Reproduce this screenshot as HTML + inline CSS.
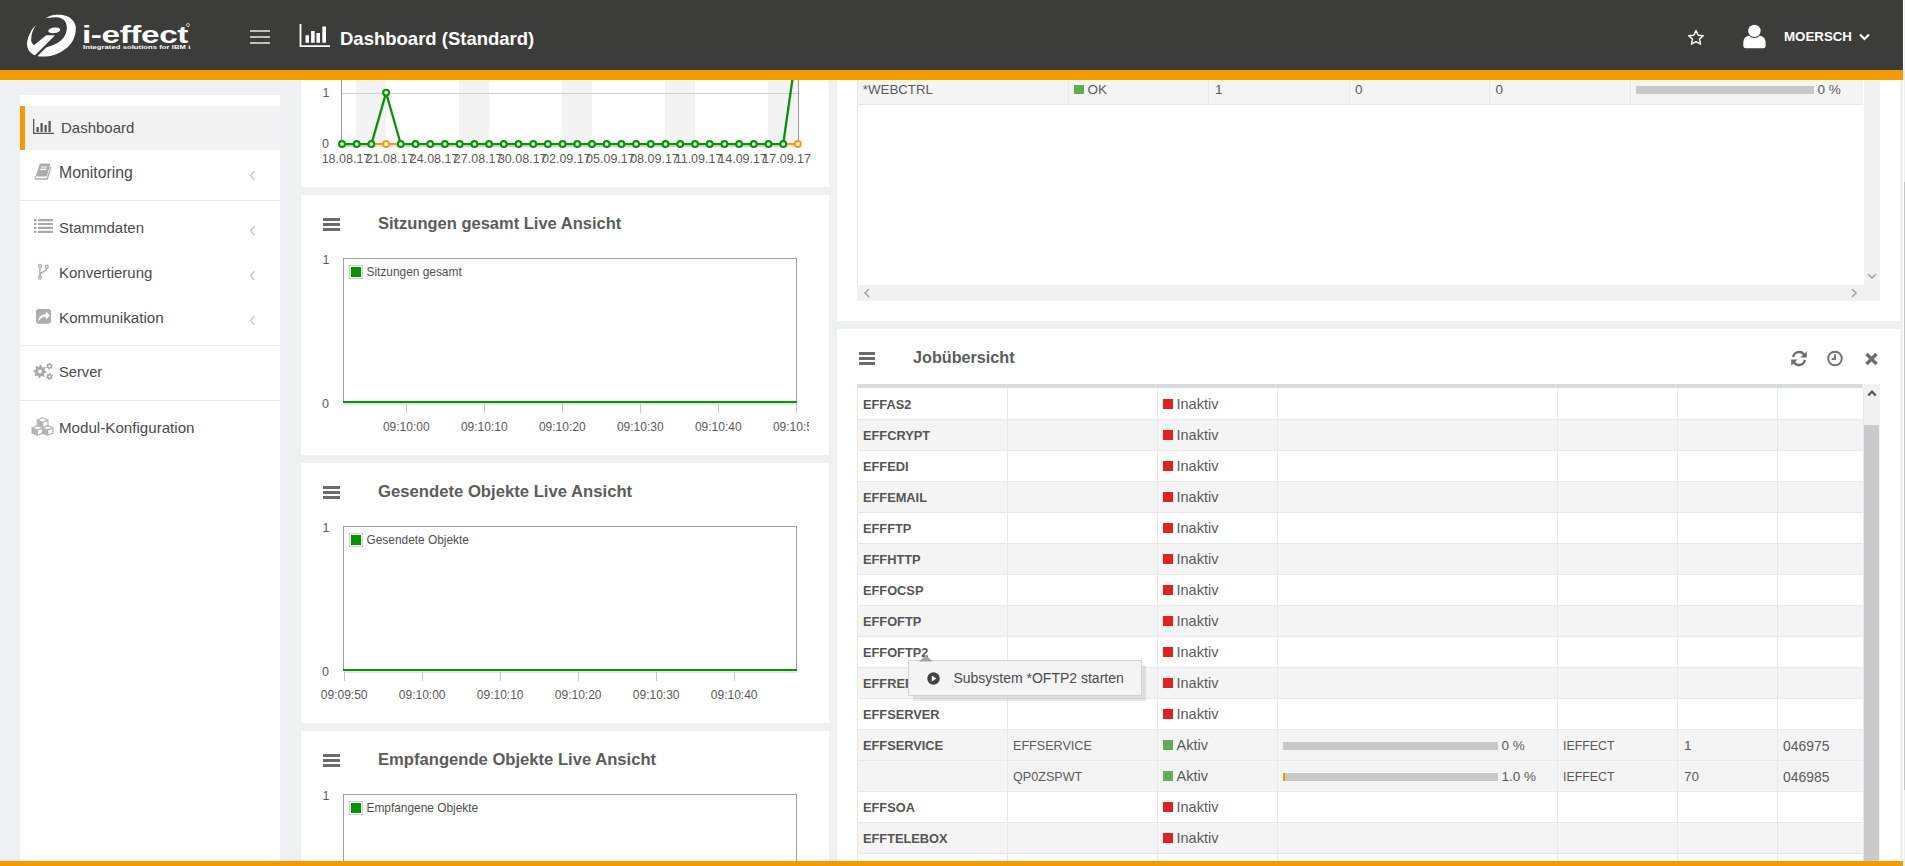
<!DOCTYPE html>
<html><head><meta charset="utf-8">
<style>
*{box-sizing:border-box;margin:0;padding:0}
html,body{width:1905px;height:866px;overflow:hidden;background:#eef0f4;font-family:"Liberation Sans",sans-serif;color:#555}
.abs{position:absolute}
#hdr{position:absolute;left:0;top:0;width:1903px;height:70px;background:#3c3c3b;z-index:10}
#hdrbar{position:absolute;left:0;top:70px;width:1903px;height:10px;background:#f59b00;z-index:10}
#botbar{position:absolute;left:0;top:861px;width:1903px;height:5px;background:#f59b00;z-index:10}
#vscroll{position:absolute;left:1903px;top:0;width:2px;height:866px;background:#fff;border-right:1px solid #eeeeee;z-index:11}
#vthumb{position:absolute;left:1904px;top:182px;width:1px;height:608px;background:#c4c4c4;z-index:12}
.panel{position:absolute;background:#fff}
.side{position:absolute;left:20px;top:95px;width:260px;height:780px;background:#fff}
.si{position:absolute;left:0;width:260px;height:45px;font-size:15px;color:#4d4d4d}
.si span{position:absolute;left:40px;top:17px;line-height:17px;white-space:nowrap}
.sep{position:absolute;left:0;width:260px;height:1px;background:#e6e6e6}
.chev{position:absolute;left:229px;top:20px}
.ptitle{position:absolute;font-weight:bold;font-size:16.4px;color:#5c5c5c;white-space:nowrap;line-height:20px}
.ham{position:absolute;width:17px;height:14px}
.ham i{position:absolute;left:0;width:17px;height:3px;background:#6a6a6a}
.lbl{position:absolute;font-size:11px;color:#555;white-space:nowrap;line-height:13px}
</style></head>
<body>
<div id="hdr">
 <svg class="abs" style="left:24px;top:12px" width="56" height="48" viewBox="0 0 56 48">
  <path fill="#fff" d="M21.3,6.4 C26,3.5 30,2.6 33.3,2.8 C40,2.6 45,4.5 47.1,6.7 C50.5,9.5 52,13 51.8,16.6 C51.8,21 50.8,25 48.8,28.8 C46,33.5 42.5,36.8 38.8,38.8 C34.5,41.5 29.5,43.8 24.9,44.3 C20,44.8 15,44.6 13.3,44.3 L22.2,35.5 C26,34 30,33 33.3,31 C37,29 40,26 41,23.3 C42.5,20 43.2,17 42.7,13.9 C42.3,10.5 40.8,8.5 38.8,7.2 C36.5,5.8 33.5,5.2 31,5.3 C27,5.5 23.5,6 21.3,6.4 Z"/>
  <path fill="#fff" d="M11.9,13 C7.5,17 4,24 3,31 C3,35 4,38 6,40 C8,42 10,43 11.1,43.2 L31,23.3 L22.2,23.3 L10,33.3 C7.5,31 7,29 7.2,27.7 C7.2,23 8.5,18 11.9,13 Z"/>
  <ellipse fill="#fff" cx="30.2" cy="18.3" rx="6" ry="2.8" transform="rotate(-8 30.2 18.3)"/>
 </svg>
 <div class="abs" style="left:82px;top:22.5px;font-size:24.5px;font-weight:bold;color:#fff;line-height:24px;transform-origin:0 0;transform:scaleX(1.36);letter-spacing:-0.3px">i-effect</div>
 <div class="abs" style="left:186px;top:23px;width:3.8px;height:3.8px;border:0.8px solid #cfcfcf;border-radius:50%"></div>
 <div class="abs" style="left:82.5px;top:44.1px;font-size:6px;font-weight:bold;color:#fff;line-height:7px;transform-origin:0 0;transform:scaleX(1.27);white-space:nowrap;letter-spacing:0.05px">Integrated solutions for IBM i</div>
 <!-- hamburger -->
 <div class="abs" style="left:250px;top:30px;width:20px;height:2px;background:#bdbdbd"></div>
 <div class="abs" style="left:250px;top:36px;width:20px;height:2px;background:#bdbdbd"></div>
 <div class="abs" style="left:250px;top:42px;width:20px;height:2px;background:#bdbdbd"></div>
 <!-- chart icon -->
 <svg class="abs" style="left:299px;top:24px" width="31" height="24" viewBox="0 0 31 24">
  <path fill="#fff" d="M0.6,0h1.8v21.2H31V23H0.6z M6.5,11.2h3.6v7.6H6.5z M12.1,7h3.6v11.8h-3.6z M17.4,9.1h3.6v9.7h-3.6z M23.3,2.4h3.7v16.4h-3.7z"/>
 </svg>
 <div class="abs" style="left:340px;top:28px;font-size:18.5px;font-weight:bold;color:#fff;line-height:21px;white-space:nowrap">Dashboard (Standard)</div>
 <!-- star -->
 <svg class="abs" style="left:1687px;top:29px" width="18" height="17" viewBox="0 0 18 17">
  <path fill="none" stroke="#fff" stroke-width="1.4" stroke-linejoin="round" d="M9,1.5 L11.2,6.2 L16.3,6.7 L12.5,10.1 L13.6,15.2 L9,12.6 L4.4,15.2 L5.5,10.1 L1.7,6.7 L6.8,6.2 Z"/>
 </svg>
 <!-- user -->
 <svg class="abs" style="left:1742px;top:24px" width="25" height="25" viewBox="0 0 25 25">
  <path fill="#fff" d="M1.3,21.5 V18.8 C1.3,14.2 4,11.8 8,11.8 H16.8 C20.8,11.8 23.6,14.2 23.6,18.8 V21.5 C23.6,23 22.8,24.2 21.3,24.2 H3.6 C2.1,24.2 1.3,23 1.3,21.5 Z"/>
  <circle cx="12.4" cy="6.9" r="7.1" fill="#3c3c3b"/>
  <circle cx="12.4" cy="6.9" r="6.2" fill="#fff"/>
 </svg>
 <div class="abs" style="left:1784px;top:29px;font-size:13.3px;font-weight:bold;color:#fff;line-height:15px;white-space:nowrap">MOERSCH</div>
 <svg class="abs" style="left:1859px;top:33px" width="11" height="8" viewBox="0 0 11 8">
  <path fill="none" stroke="#fff" stroke-width="2" d="M1,1.5 L5.5,6 L10,1.5"/>
 </svg>
</div>
<div id="hdrbar"></div>
<div id="botbar"></div>
<div id="vscroll"></div><div id="vthumb"></div>

<!-- sidebar -->
<div class="side">
 <div class="abs" style="left:0;top:11px;width:260px;height:44px;background:#f2f2f2"></div>
 <div class="abs" style="left:0;top:11px;width:5px;height:44px;background:#f59b00"></div>
 <!-- Dashboard icon -->
 <svg class="abs" style="left:13px;top:24px" width="21" height="15" viewBox="0 0 21 15">
  <path fill="#555" d="M0,0h1.3v13.7H21V15H0z M3.5,8h2.2v5H3.5z M7.5,4h2.2v9H7.5z M11.5,6h2.2v7h-2.2z M15.5,2h2.2v11h-2.2z"/>
 </svg>
 <div class="abs" style="left:41px;top:24px;font-size:15px;color:#4a4a4a;line-height:17px">Dashboard</div>
 <!-- Monitoring -->
 <svg class="abs" style="left:14px;top:68px" width="19" height="18" viewBox="0 0 19 18">
  <path fill="#adadad" d="M5.9,0.6 H15.3 C16,0.6 16.3,1.1 16.1,1.7 L12.8,13.6 H1.6 Z"/>
  <path fill="none" stroke="#adadad" stroke-width="1.3" d="M2,13.7 C0.7,14.2 0.8,16 2.2,16 H13.3 L16.9,3.6"/>
  <path fill="#fff" d="M7.2,3.4 H13.3 L13,4.6 H6.9 Z M6.4,5.7 H12.6 L12.3,6.9 H6.1 Z"/>
 </svg>
 <div class="abs" style="left:39px;top:68.7px;font-size:15.8px;color:#4a4a4a;line-height:17px">Monitoring</div>
 <div class="chev" style="top:71.5px"><svg width="7" height="11" viewBox="0 0 7 11"><path fill="none" stroke="#c8c8c8" stroke-width="1.3" d="M5.5,1 L1.5,5.5 L5.5,10"/></svg></div>
 <div class="sep" style="top:105px"></div>
 <!-- Stammdaten -->
 <svg class="abs" style="left:14px;top:124px" width="19" height="14" viewBox="0 0 19 14">
  <path fill="#a9a9a9" d="M0,0h2.5v2.2H0z M4,0h15v2.2H4z M0,3.9h2.5v2.2H0z M4,3.9h15v2.2H4z M0,7.8h2.5v2.2H0z M4,7.8h15v2.2H4z M0,11.7h2.5v2.2H0z M4,11.7h15v2.2H4z"/>
 </svg>
 <div class="abs" style="left:39px;top:124px;font-size:15px;color:#4a4a4a;line-height:17px">Stammdaten</div>
 <div class="chev" style="top:126.5px"><svg width="7" height="11" viewBox="0 0 7 11"><path fill="none" stroke="#c8c8c8" stroke-width="1.3" d="M5.5,1 L1.5,5.5 L5.5,10"/></svg></div>
 <!-- Konvertierung -->
 <svg class="abs" style="left:16px;top:168px" width="14" height="17" viewBox="0 0 14 17">
  <g fill="none" stroke="#a9a9a9" stroke-width="1.3"><circle cx="4" cy="2.9" r="1.5"/><circle cx="10.7" cy="3.7" r="1.5"/><circle cx="4" cy="14.5" r="1.5"/><path d="M4,4.4 V13 M10.7,5.2 C10.7,9 4.5,8.5 4,11.5"/></g>
 </svg>
 <div class="abs" style="left:39px;top:169px;font-size:15px;color:#4a4a4a;line-height:17px">Konvertierung</div>
 <div class="chev" style="top:171.5px"><svg width="7" height="11" viewBox="0 0 7 11"><path fill="none" stroke="#c8c8c8" stroke-width="1.3" d="M5.5,1 L1.5,5.5 L5.5,10"/></svg></div>
 <!-- Kommunikation -->
 <svg class="abs" style="left:16px;top:214px" width="16" height="16" viewBox="0 0 16 16">
  <rect x="0" y="0" width="15" height="14.7" rx="2.6" fill="#adadad"/>
  <path fill="#fff" d="M2.2,13.2 C2.2,9 4.6,5.2 9.9,5.0 V2.2 L13.8,6.4 L9.9,10.5 V7.8 C6.5,7.8 3.8,9.5 2.2,13.2 Z"/>
 </svg>
 <div class="abs" style="left:39px;top:213.9px;font-size:15.2px;color:#4a4a4a;line-height:17px">Kommunikation</div>
 <div class="chev" style="top:216.5px"><svg width="7" height="11" viewBox="0 0 7 11"><path fill="none" stroke="#c8c8c8" stroke-width="1.3" d="M5.5,1 L1.5,5.5 L5.5,10"/></svg></div>
 <div class="sep" style="top:250px"></div>
 <!-- Server -->
 <svg class="abs" style="left:13px;top:267px" width="21" height="19" viewBox="0 0 21 19"><path d="M7.00,2.90 L8.29,3.03 L8.84,5.07 L9.67,5.51 L11.67,4.83 L12.49,5.83 L11.43,7.66 L11.71,8.56 L13.60,9.50 L13.47,10.79 L11.43,11.34 L10.99,12.17 L11.67,14.17 L10.67,14.99 L8.84,13.93 L7.94,14.21 L7.00,16.10 L5.71,15.97 L5.16,13.93 L4.33,13.49 L2.33,14.17 L1.51,13.17 L2.57,11.34 L2.29,10.44 L0.40,9.50 L0.53,8.21 L2.57,7.66 L3.01,6.83 L2.33,4.83 L3.33,4.01 L5.16,5.07 L6.06,4.79 Z" fill="#a9a9a9"/><circle cx="7" cy="9.5" r="2" fill="#fff"/><path d="M16.50,0.60 L17.43,0.72 L17.75,2.03 L18.27,2.43 L19.62,2.40 L19.98,3.27 L19.00,4.20 L18.91,4.85 L19.62,6.00 L19.05,6.75 L17.75,6.37 L17.15,6.61 L16.50,7.80 L15.57,7.68 L15.25,6.37 L14.73,5.97 L13.38,6.00 L13.02,5.13 L14.00,4.20 L14.09,3.55 L13.38,2.40 L13.95,1.65 L15.25,2.03 L15.85,1.79 Z" fill="#a9a9a9"/><circle cx="16.5" cy="4.2" r="1.1" fill="#fff"/><path d="M16.50,10.90 L17.43,11.02 L17.75,12.33 L18.27,12.73 L19.62,12.70 L19.98,13.57 L19.00,14.50 L18.91,15.15 L19.62,16.30 L19.05,17.05 L17.75,16.67 L17.15,16.91 L16.50,18.10 L15.57,17.98 L15.25,16.67 L14.73,16.27 L13.38,16.30 L13.02,15.43 L14.00,14.50 L14.09,13.85 L13.38,12.70 L13.95,11.95 L15.25,12.33 L15.85,12.09 Z" fill="#a9a9a9"/><circle cx="16.5" cy="14.5" r="1.1" fill="#fff"/></svg>
 <div class="abs" style="left:39px;top:269.2px;font-size:14.7px;color:#4a4a4a;line-height:17px">Server</div>
 <div class="sep" style="top:305px"></div>
 <!-- Modul -->
 <svg class="abs" style="left:11px;top:321px" width="24" height="21" viewBox="0 0 24 21"><path d="M6.3,4.0 L11.6,6.2 L11.6,11.5 L6.3,9.3 Z" fill="#b3b3b3" stroke="#b3b3b3" stroke-width="1.2" stroke-linejoin="round"/><path d="M11.6,6.2 L16.9,4.0 L16.9,9.3 L11.6,11.5 Z" fill="#fff" stroke="#b3b3b3" stroke-width="1.2" stroke-linejoin="round"/><path d="M11.6,1.8 L16.9,4.0 L11.6,6.2 L6.3,4.0 Z" fill="#fff" stroke="#b3b3b3" stroke-width="1.2" stroke-linejoin="round"/><path d="M1.1000000000000005,11.8 L6.4,14.0 L6.4,19.3 L1.1000000000000005,17.1 Z" fill="#b3b3b3" stroke="#b3b3b3" stroke-width="1.2" stroke-linejoin="round"/><path d="M6.4,14.0 L11.7,11.8 L11.7,17.1 L6.4,19.3 Z" fill="#fff" stroke="#b3b3b3" stroke-width="1.2" stroke-linejoin="round"/><path d="M6.4,9.6 L11.7,11.8 L6.4,14.0 L1.1000000000000005,11.8 Z" fill="#fff" stroke="#b3b3b3" stroke-width="1.2" stroke-linejoin="round"/><path d="M11.399999999999999,11.8 L16.7,14.0 L16.7,19.3 L11.399999999999999,17.1 Z" fill="#b3b3b3" stroke="#b3b3b3" stroke-width="1.2" stroke-linejoin="round"/><path d="M16.7,14.0 L22.0,11.8 L22.0,17.1 L16.7,19.3 Z" fill="#fff" stroke="#b3b3b3" stroke-width="1.2" stroke-linejoin="round"/><path d="M16.7,9.6 L22.0,11.8 L16.7,14.0 L11.399999999999999,11.8 Z" fill="#fff" stroke="#b3b3b3" stroke-width="1.2" stroke-linejoin="round"/></svg>
 <div class="abs" style="left:39px;top:323.9px;font-size:15.15px;color:#4a4a4a;line-height:17px">Modul-Konfiguration</div>
</div>

<div class="panel" style="left:301px;top:60px;width:528px;height:127px"></div>
<div class="panel" style="left:301px;top:195px;width:528px;height:260px"></div>
<div class="panel" style="left:301px;top:463px;width:528px;height:260px"></div>
<div class="panel" style="left:301px;top:731px;width:528px;height:140px"></div>
<svg class="abs" style="left:301px;top:60px" width="528" height="127" viewBox="301 60 528 127">
<rect x="356" y="60" width="30" height="84" fill="#f3f3f3"/>
<rect x="459" y="60" width="30" height="84" fill="#f3f3f3"/>
<rect x="562" y="60" width="30" height="84" fill="#f3f3f3"/>
<rect x="665" y="60" width="30" height="84" fill="#f3f3f3"/>
<rect x="768" y="60" width="30" height="84" fill="#f3f3f3"/>
<line x1="341.5" y1="93.5" x2="798.5" y2="93.5" stroke="#cfcfcf" stroke-width="1"/>
<line x1="341.5" y1="60" x2="341.5" y2="144" stroke="#9a9a9a" stroke-width="1"/>
<line x1="798.5" y1="60" x2="798.5" y2="144" stroke="#9a9a9a" stroke-width="1"/>
<polyline points="342,146 797.9,146" fill="none" stroke="rgba(0,0,0,0.10)" stroke-width="2.5"/>
<polyline points="342.0,146.0 356.7,146.0 371.4,146.0 386.1,94.6 400.8,146.0 415.5,146.0 430.2,146.0 444.9,146.0 459.7,146.0 474.4,146.0 489.1,146.0 503.8,146.0 518.5,146.0 533.2,146.0 547.9,146.0 562.6,146.0 577.3,146.0 592.0,146.0 606.7,146.0 621.4,146.0 636.1,146.0 650.8,146.0 665.5,146.0 680.2,146.0 695.0,146.0 709.7,146.0 724.4,146.0 739.1,146.0 753.8,146.0 768.5,146.0 783.2,146.0 797.9,43.2" fill="none" stroke="rgba(0,0,0,0.10)" stroke-width="2.5"/>
<polyline points="342,144 797.9,144" fill="none" stroke="#fb9a0a" stroke-width="2.2"/>
<polyline points="342.0,144.0 356.7,144.0 371.4,144.0 386.1,92.6 400.8,144.0 415.5,144.0 430.2,144.0 444.9,144.0 459.7,144.0 474.4,144.0 489.1,144.0 503.8,144.0 518.5,144.0 533.2,144.0 547.9,144.0 562.6,144.0 577.3,144.0 592.0,144.0 606.7,144.0 621.4,144.0 636.1,144.0 650.8,144.0 665.5,144.0 680.2,144.0 695.0,144.0 709.7,144.0 724.4,144.0 739.1,144.0 753.8,144.0 768.5,144.0 783.2,144.0 797.9,41.2" fill="none" stroke="#009600" stroke-width="2.2" stroke-linejoin="round"/>
<circle cx="342.0" cy="144.0" r="2.9" fill="#fff" stroke="#009600" stroke-width="2.1"/>
<circle cx="356.7" cy="144.0" r="2.9" fill="#fff" stroke="#009600" stroke-width="2.1"/>
<circle cx="371.4" cy="144.0" r="2.9" fill="#fff" stroke="#009600" stroke-width="2.1"/>
<circle cx="386.1" cy="144" r="2.9" fill="#fff" stroke="#fb9a0a" stroke-width="2"/>
<circle cx="386.1" cy="92.6" r="2.9" fill="#fff" stroke="#009600" stroke-width="2.1"/>
<circle cx="400.8" cy="144.0" r="2.9" fill="#fff" stroke="#009600" stroke-width="2.1"/>
<circle cx="415.5" cy="144.0" r="2.9" fill="#fff" stroke="#009600" stroke-width="2.1"/>
<circle cx="430.2" cy="144.0" r="2.9" fill="#fff" stroke="#009600" stroke-width="2.1"/>
<circle cx="444.9" cy="144.0" r="2.9" fill="#fff" stroke="#009600" stroke-width="2.1"/>
<circle cx="459.7" cy="144.0" r="2.9" fill="#fff" stroke="#009600" stroke-width="2.1"/>
<circle cx="474.4" cy="144.0" r="2.9" fill="#fff" stroke="#009600" stroke-width="2.1"/>
<circle cx="489.1" cy="144.0" r="2.9" fill="#fff" stroke="#009600" stroke-width="2.1"/>
<circle cx="503.8" cy="144.0" r="2.9" fill="#fff" stroke="#009600" stroke-width="2.1"/>
<circle cx="518.5" cy="144.0" r="2.9" fill="#fff" stroke="#009600" stroke-width="2.1"/>
<circle cx="533.2" cy="144.0" r="2.9" fill="#fff" stroke="#009600" stroke-width="2.1"/>
<circle cx="547.9" cy="144.0" r="2.9" fill="#fff" stroke="#009600" stroke-width="2.1"/>
<circle cx="562.6" cy="144.0" r="2.9" fill="#fff" stroke="#009600" stroke-width="2.1"/>
<circle cx="577.3" cy="144.0" r="2.9" fill="#fff" stroke="#009600" stroke-width="2.1"/>
<circle cx="592.0" cy="144.0" r="2.9" fill="#fff" stroke="#009600" stroke-width="2.1"/>
<circle cx="606.7" cy="144.0" r="2.9" fill="#fff" stroke="#009600" stroke-width="2.1"/>
<circle cx="621.4" cy="144.0" r="2.9" fill="#fff" stroke="#009600" stroke-width="2.1"/>
<circle cx="636.1" cy="144.0" r="2.9" fill="#fff" stroke="#009600" stroke-width="2.1"/>
<circle cx="650.8" cy="144.0" r="2.9" fill="#fff" stroke="#009600" stroke-width="2.1"/>
<circle cx="665.5" cy="144.0" r="2.9" fill="#fff" stroke="#009600" stroke-width="2.1"/>
<circle cx="680.2" cy="144.0" r="2.9" fill="#fff" stroke="#009600" stroke-width="2.1"/>
<circle cx="695.0" cy="144.0" r="2.9" fill="#fff" stroke="#009600" stroke-width="2.1"/>
<circle cx="709.7" cy="144.0" r="2.9" fill="#fff" stroke="#009600" stroke-width="2.1"/>
<circle cx="724.4" cy="144.0" r="2.9" fill="#fff" stroke="#009600" stroke-width="2.1"/>
<circle cx="739.1" cy="144.0" r="2.9" fill="#fff" stroke="#009600" stroke-width="2.1"/>
<circle cx="753.8" cy="144.0" r="2.9" fill="#fff" stroke="#009600" stroke-width="2.1"/>
<circle cx="768.5" cy="144.0" r="2.9" fill="#fff" stroke="#009600" stroke-width="2.1"/>
<circle cx="783.2" cy="144.0" r="2.9" fill="#fff" stroke="#009600" stroke-width="2.1"/>
<circle cx="797.9" cy="144" r="2.9" fill="#fff" stroke="#fb9a0a" stroke-width="2"/>
<circle cx="797.9" cy="41.2" r="2.9" fill="#fff" stroke="#009600" stroke-width="2.1"/>
</svg>
<div class="abs" style="left:322.50px;top:86.28px;font-size:12.5px;line-height:14.37px;color:#5a5a5a;white-space:nowrap;">1</div>
<div class="abs" style="left:322.00px;top:137.48px;font-size:12.5px;line-height:14.37px;color:#5a5a5a;white-space:nowrap;">0</div>
<div class="abs" style="left:246.00px;width:200px;text-align:center;top:152.18px;font-size:12.5px;line-height:14.37px;color:#5a5a5a;white-space:nowrap;">18.08.17</div>
<div class="abs" style="left:290.07px;width:200px;text-align:center;top:152.18px;font-size:12.5px;line-height:14.37px;color:#5a5a5a;white-space:nowrap;">21.08.17</div>
<div class="abs" style="left:334.14px;width:200px;text-align:center;top:152.18px;font-size:12.5px;line-height:14.37px;color:#5a5a5a;white-space:nowrap;">24.08.17</div>
<div class="abs" style="left:378.21px;width:200px;text-align:center;top:152.18px;font-size:12.5px;line-height:14.37px;color:#5a5a5a;white-space:nowrap;">27.08.17</div>
<div class="abs" style="left:422.28px;width:200px;text-align:center;top:152.18px;font-size:12.5px;line-height:14.37px;color:#5a5a5a;white-space:nowrap;">30.08.17</div>
<div class="abs" style="left:466.35px;width:200px;text-align:center;top:152.18px;font-size:12.5px;line-height:14.37px;color:#5a5a5a;white-space:nowrap;">02.09.17</div>
<div class="abs" style="left:510.42px;width:200px;text-align:center;top:152.18px;font-size:12.5px;line-height:14.37px;color:#5a5a5a;white-space:nowrap;">05.09.17</div>
<div class="abs" style="left:554.49px;width:200px;text-align:center;top:152.18px;font-size:12.5px;line-height:14.37px;color:#5a5a5a;white-space:nowrap;">08.09.17</div>
<div class="abs" style="left:598.56px;width:200px;text-align:center;top:152.18px;font-size:12.5px;line-height:14.37px;color:#5a5a5a;white-space:nowrap;">11.09.17</div>
<div class="abs" style="left:642.63px;width:200px;text-align:center;top:152.18px;font-size:12.5px;line-height:14.37px;color:#5a5a5a;white-space:nowrap;">14.09.17</div>
<div class="abs" style="left:686.70px;width:200px;text-align:center;top:152.18px;font-size:12.5px;line-height:14.37px;color:#5a5a5a;white-space:nowrap;">17.09.17</div>
<div class="abs" style="left:323px;top:218px;width:17px;height:3px;background:#6b6b6b;"></div>
<div class="abs" style="left:323px;top:223px;width:17px;height:3px;background:#6b6b6b;"></div>
<div class="abs" style="left:323px;top:228px;width:17px;height:3px;background:#6b6b6b;"></div>
<div class="abs" style="left:378.00px;top:213.80px;font-size:16.5px;line-height:18.97px;font-weight:bold;color:#5c5c5c;white-space:nowrap;">Sitzungen gesamt Live Ansicht</div>
<div class="abs" style="left:322.50px;top:253.48px;font-size:12.5px;line-height:14.37px;color:#5a5a5a;white-space:nowrap;">1</div>
<div class="abs" style="left:322.00px;top:396.98px;font-size:12.5px;line-height:14.37px;color:#5a5a5a;white-space:nowrap;">0</div>
<div class="abs" style="left:343px;top:258px;width:454px;height:145px;border:1px solid #9e9e9e;border-bottom:none"></div>
<div class="abs" style="left:349px;top:265px;width:14px;height:14px;border:1px solid #d0d0d0;background:#fff"></div>
<div class="abs" style="left:351px;top:267px;width:10px;height:10px;background:#009600;"></div>
<div class="abs" style="left:366.50px;top:265.83px;font-size:11.9px;line-height:13.68px;color:#4f4f4f;white-space:nowrap;">Sitzungen gesamt</div>
<div class="abs" style="left:344px;top:402.8px;width:453px;height:2.6px;background:rgba(0,0,0,0.10);"></div>
<div class="abs" style="left:343px;top:400.8px;width:454px;height:2.2px;background:#009600;"></div>
<div class="abs" style="left:406px;top:403.5px;width:1px;height:9px;background:#c6c6c6;"></div>
<div class="abs" style="left:484px;top:403.5px;width:1px;height:9px;background:#c6c6c6;"></div>
<div class="abs" style="left:562px;top:403.5px;width:1px;height:9px;background:#c6c6c6;"></div>
<div class="abs" style="left:640px;top:403.5px;width:1px;height:9px;background:#c6c6c6;"></div>
<div class="abs" style="left:718px;top:403.5px;width:1px;height:9px;background:#c6c6c6;"></div>
<div class="abs" style="left:796px;top:403.5px;width:1px;height:9px;background:#c6c6c6;"></div>
<div class="abs" style="left:306.30px;width:200px;text-align:center;top:420.94px;font-size:12px;line-height:13.8px;color:#5a5a5a;white-space:nowrap;">09:10:00</div>
<div class="abs" style="left:384.30px;width:200px;text-align:center;top:420.94px;font-size:12px;line-height:13.8px;color:#5a5a5a;white-space:nowrap;">09:10:10</div>
<div class="abs" style="left:462.30px;width:200px;text-align:center;top:420.94px;font-size:12px;line-height:13.8px;color:#5a5a5a;white-space:nowrap;">09:10:20</div>
<div class="abs" style="left:540.30px;width:200px;text-align:center;top:420.94px;font-size:12px;line-height:13.8px;color:#5a5a5a;white-space:nowrap;">09:10:30</div>
<div class="abs" style="left:618.30px;width:200px;text-align:center;top:420.94px;font-size:12px;line-height:13.8px;color:#5a5a5a;white-space:nowrap;">09:10:40</div>
<div class="abs" style="left:772.9px;top:420.94px;width:36.1px;overflow:hidden;font-size:12px;line-height:13.8px;color:#5a5a5a;white-space:nowrap">09:10:50</div>
<div class="abs" style="left:323px;top:486px;width:17px;height:3px;background:#6b6b6b;"></div>
<div class="abs" style="left:323px;top:491px;width:17px;height:3px;background:#6b6b6b;"></div>
<div class="abs" style="left:323px;top:496px;width:17px;height:3px;background:#6b6b6b;"></div>
<div class="abs" style="left:378.00px;top:481.63px;font-size:16.68px;line-height:19.18px;font-weight:bold;color:#5c5c5c;white-space:nowrap;">Gesendete Objekte Live Ansicht</div>
<div class="abs" style="left:322.50px;top:521.48px;font-size:12.5px;line-height:14.37px;color:#5a5a5a;white-space:nowrap;">1</div>
<div class="abs" style="left:322.00px;top:664.98px;font-size:12.5px;line-height:14.37px;color:#5a5a5a;white-space:nowrap;">0</div>
<div class="abs" style="left:343px;top:526px;width:454px;height:145px;border:1px solid #9e9e9e;border-bottom:none"></div>
<div class="abs" style="left:349px;top:533px;width:14px;height:14px;border:1px solid #d0d0d0;background:#fff"></div>
<div class="abs" style="left:351px;top:535px;width:10px;height:10px;background:#009600;"></div>
<div class="abs" style="left:366.50px;top:533.83px;font-size:11.9px;line-height:13.68px;color:#4f4f4f;white-space:nowrap;">Gesendete Objekte</div>
<div class="abs" style="left:344px;top:670.8px;width:453px;height:2.6px;background:rgba(0,0,0,0.10);"></div>
<div class="abs" style="left:343px;top:668.8px;width:454px;height:2.2px;background:#009600;"></div>
<div class="abs" style="left:344px;top:671.5px;width:1px;height:9px;background:#c6c6c6;"></div>
<div class="abs" style="left:422px;top:671.5px;width:1px;height:9px;background:#c6c6c6;"></div>
<div class="abs" style="left:500px;top:671.5px;width:1px;height:9px;background:#c6c6c6;"></div>
<div class="abs" style="left:578px;top:671.5px;width:1px;height:9px;background:#c6c6c6;"></div>
<div class="abs" style="left:656px;top:671.5px;width:1px;height:9px;background:#c6c6c6;"></div>
<div class="abs" style="left:734px;top:671.5px;width:1px;height:9px;background:#c6c6c6;"></div>
<div class="abs" style="left:244.20px;width:200px;text-align:center;top:688.94px;font-size:12px;line-height:13.8px;color:#5a5a5a;white-space:nowrap;">09:09:50</div>
<div class="abs" style="left:322.20px;width:200px;text-align:center;top:688.94px;font-size:12px;line-height:13.8px;color:#5a5a5a;white-space:nowrap;">09:10:00</div>
<div class="abs" style="left:400.20px;width:200px;text-align:center;top:688.94px;font-size:12px;line-height:13.8px;color:#5a5a5a;white-space:nowrap;">09:10:10</div>
<div class="abs" style="left:478.20px;width:200px;text-align:center;top:688.94px;font-size:12px;line-height:13.8px;color:#5a5a5a;white-space:nowrap;">09:10:20</div>
<div class="abs" style="left:556.20px;width:200px;text-align:center;top:688.94px;font-size:12px;line-height:13.8px;color:#5a5a5a;white-space:nowrap;">09:10:30</div>
<div class="abs" style="left:634.20px;width:200px;text-align:center;top:688.94px;font-size:12px;line-height:13.8px;color:#5a5a5a;white-space:nowrap;">09:10:40</div>
<div class="abs" style="left:323px;top:754px;width:17px;height:3px;background:#6b6b6b;"></div>
<div class="abs" style="left:323px;top:759px;width:17px;height:3px;background:#6b6b6b;"></div>
<div class="abs" style="left:323px;top:764px;width:17px;height:3px;background:#6b6b6b;"></div>
<div class="abs" style="left:378.00px;top:749.68px;font-size:16.62px;line-height:19.11px;font-weight:bold;color:#5c5c5c;white-space:nowrap;">Empfangende Objekte Live Ansicht</div>
<div class="abs" style="left:322.50px;top:789.48px;font-size:12.5px;line-height:14.37px;color:#5a5a5a;white-space:nowrap;">1</div>
<div class="abs" style="left:322.00px;top:932.98px;font-size:12.5px;line-height:14.37px;color:#5a5a5a;white-space:nowrap;">0</div>
<div class="abs" style="left:343px;top:794px;width:454px;height:145px;border:1px solid #9e9e9e;border-bottom:none"></div>
<div class="abs" style="left:349px;top:801px;width:14px;height:14px;border:1px solid #d0d0d0;background:#fff"></div>
<div class="abs" style="left:351px;top:803px;width:10px;height:10px;background:#009600;"></div>
<div class="abs" style="left:366.50px;top:801.83px;font-size:11.9px;line-height:13.68px;color:#4f4f4f;white-space:nowrap;">Empfangene Objekte</div>
<div class="abs" style="left:344px;top:938.8px;width:453px;height:2.6px;background:rgba(0,0,0,0.10);"></div>
<div class="abs" style="left:343px;top:936.8px;width:454px;height:2.2px;background:#009600;"></div>
<div class="abs" style="left:344px;top:939.5px;width:1px;height:9px;background:#c6c6c6;"></div>
<div class="abs" style="left:422px;top:939.5px;width:1px;height:9px;background:#c6c6c6;"></div>
<div class="abs" style="left:500px;top:939.5px;width:1px;height:9px;background:#c6c6c6;"></div>
<div class="abs" style="left:578px;top:939.5px;width:1px;height:9px;background:#c6c6c6;"></div>
<div class="abs" style="left:656px;top:939.5px;width:1px;height:9px;background:#c6c6c6;"></div>
<div class="abs" style="left:734px;top:939.5px;width:1px;height:9px;background:#c6c6c6;"></div>
<div class="abs" style="left:244.20px;width:200px;text-align:center;top:956.94px;font-size:12px;line-height:13.8px;color:#5a5a5a;white-space:nowrap;">09:09:50</div>
<div class="abs" style="left:322.20px;width:200px;text-align:center;top:956.94px;font-size:12px;line-height:13.8px;color:#5a5a5a;white-space:nowrap;">09:10:00</div>
<div class="abs" style="left:400.20px;width:200px;text-align:center;top:956.94px;font-size:12px;line-height:13.8px;color:#5a5a5a;white-space:nowrap;">09:10:10</div>
<div class="abs" style="left:478.20px;width:200px;text-align:center;top:956.94px;font-size:12px;line-height:13.8px;color:#5a5a5a;white-space:nowrap;">09:10:20</div>
<div class="abs" style="left:556.20px;width:200px;text-align:center;top:956.94px;font-size:12px;line-height:13.8px;color:#5a5a5a;white-space:nowrap;">09:10:30</div>
<div class="abs" style="left:634.20px;width:200px;text-align:center;top:956.94px;font-size:12px;line-height:13.8px;color:#5a5a5a;white-space:nowrap;">09:10:40</div>
<div class="panel" style="left:837px;top:60px;width:1063px;height:261px"></div>
<div class="panel" style="left:837px;top:329px;width:1063px;height:540px"></div>
<div class="abs" style="left:857px;top:60px;width:1006px;height:44px;background:#f4f4f4;"></div>
<div class="abs" style="left:857px;top:104px;width:1006px;height:1px;background:#e4e9ee;"></div>
<div class="abs" style="left:857px;top:60px;width:1px;height:225px;background:#e4e9ee;"></div>
<div class="abs" style="left:1068px;top:60px;width:1px;height:44px;background:#e4e9ee;"></div>
<div class="abs" style="left:1208px;top:60px;width:1px;height:44px;background:#e4e9ee;"></div>
<div class="abs" style="left:1349px;top:60px;width:1px;height:44px;background:#e4e9ee;"></div>
<div class="abs" style="left:1489px;top:60px;width:1px;height:44px;background:#e4e9ee;"></div>
<div class="abs" style="left:1630px;top:60px;width:1px;height:44px;background:#e4e9ee;"></div>
<div class="abs" style="left:862.80px;top:81.74px;font-size:13.3px;line-height:15.29px;color:#5a5a5a;white-space:nowrap;">*WEBCTRL</div>
<div class="abs" style="left:1074px;top:85px;width:10px;height:9px;background:#5cb050;"></div>
<div class="abs" style="left:1087.60px;top:81.56px;font-size:13.5px;line-height:15.52px;color:#5a5a5a;white-space:nowrap;">OK</div>
<div class="abs" style="left:1215.00px;top:81.56px;font-size:13.5px;line-height:15.52px;color:#5a5a5a;white-space:nowrap;">1</div>
<div class="abs" style="left:1355.00px;top:81.56px;font-size:13.5px;line-height:15.52px;color:#5a5a5a;white-space:nowrap;">0</div>
<div class="abs" style="left:1495.50px;top:81.56px;font-size:13.5px;line-height:15.52px;color:#5a5a5a;white-space:nowrap;">0</div>
<div class="abs" style="left:1636px;top:86px;width:178px;height:8px;background:#c8c8c8;"></div>
<div class="abs" style="left:1817.50px;top:81.56px;font-size:13.5px;line-height:15.52px;color:#5a5a5a;white-space:nowrap;">0 %</div>
<div class="abs" style="left:857px;top:285px;width:1023px;height:16px;background:#f1f1f1;"></div>
<div class="abs" style="left:1864px;top:60px;width:16px;height:241px;background:#f1f1f1;"></div>
<svg class="abs" style="left:863px;top:288px" width="8" height="10" viewBox="0 0 8 10"><path d="M6,1 L2,5 L6,9" fill="none" stroke="#a3a3a3" stroke-width="1.6"/></svg>
<svg class="abs" style="left:1850px;top:288px" width="8" height="10" viewBox="0 0 8 10"><path d="M2,1 L6,5 L2,9" fill="none" stroke="#a3a3a3" stroke-width="1.6"/></svg>
<svg class="abs" style="left:1867px;top:272px" width="10" height="8" viewBox="0 0 10 8"><path d="M1,2 L5,6 L9,2" fill="none" stroke="#a3a3a3" stroke-width="1.6"/></svg>
<div class="abs" style="left:859px;top:352px;width:16px;height:3px;background:#6b6b6b;"></div>
<div class="abs" style="left:859px;top:357px;width:16px;height:3px;background:#6b6b6b;"></div>
<div class="abs" style="left:859px;top:362px;width:16px;height:3px;background:#6b6b6b;"></div>
<div class="abs" style="left:913.00px;top:347.57px;font-size:16.2px;line-height:18.63px;font-weight:bold;color:#5c5c5c;white-space:nowrap;">Jobübersicht</div>
<svg class="abs" style="left:1790px;top:350px" width="18" height="17" viewBox="0 0 18 17">
<g fill="none" stroke="#6e6e6e" stroke-width="2.4"><path d="M3.2,7.2 A6,6 0 0 1 14.2,4.8"/><path d="M14.8,9.8 A6,6 0 0 1 3.8,12.2"/></g>
<path fill="#6e6e6e" d="M16.8,1.2 V7.6 H10.4 Z M1.2,15.8 V9.4 H7.6 Z"/></svg>
<svg class="abs" style="left:1826px;top:350px" width="18" height="17" viewBox="0 0 18 17">
<circle cx="9" cy="8.5" r="6.8" fill="none" stroke="#6e6e6e" stroke-width="1.9"/>
<path d="M9,4.2 V9.2 H5.6" fill="none" stroke="#6e6e6e" stroke-width="1.8"/></svg>
<svg class="abs" style="left:1864px;top:352px" width="15" height="14" viewBox="0 0 15 14">
<path d="M2.5,2 L12.5,12 M12.5,2 L2.5,12" stroke="#6e6e6e" stroke-width="3.4"/></svg>
<div class="abs" style="left:857px;top:384px;width:1006px;height:4px;background:#d9dcdf;"></div>
<div class="abs" style="left:1864px;top:384px;width:16px;height:480px;background:#f1f1f1;"></div>
<div class="abs" style="left:1864px;top:425px;width:15px;height:440px;background:#cacaca;"></div>
<svg class="abs" style="left:1867px;top:389px" width="10" height="8" viewBox="0 0 10 8"><path d="M1.3,6.5 L5,2.5 L8.7,6.5" fill="none" stroke="#505050" stroke-width="2.2"/></svg>
<div class="abs" style="left:863.00px;top:397.80px;font-size:12.8px;line-height:14.72px;font-weight:bold;color:#555;white-space:nowrap;">EFFAS2</div>
<div class="abs" style="left:1163px;top:399px;width:10px;height:10px;background:#e42121;"></div>
<div class="abs" style="left:1176.50px;top:396.24px;font-size:14.5px;line-height:16.67px;color:#5a5a5a;white-space:nowrap;">Inaktiv</div>
<div class="abs" style="left:857px;top:419px;width:1006px;height:31px;background:#f4f4f4;"></div>
<div class="abs" style="left:863.00px;top:428.80px;font-size:12.8px;line-height:14.72px;font-weight:bold;color:#555;white-space:nowrap;">EFFCRYPT</div>
<div class="abs" style="left:1163px;top:430px;width:10px;height:10px;background:#e42121;"></div>
<div class="abs" style="left:1176.50px;top:427.24px;font-size:14.5px;line-height:16.67px;color:#5a5a5a;white-space:nowrap;">Inaktiv</div>
<div class="abs" style="left:863.00px;top:459.80px;font-size:12.8px;line-height:14.72px;font-weight:bold;color:#555;white-space:nowrap;">EFFEDI</div>
<div class="abs" style="left:1163px;top:461px;width:10px;height:10px;background:#e42121;"></div>
<div class="abs" style="left:1176.50px;top:458.24px;font-size:14.5px;line-height:16.67px;color:#5a5a5a;white-space:nowrap;">Inaktiv</div>
<div class="abs" style="left:857px;top:481px;width:1006px;height:31px;background:#f4f4f4;"></div>
<div class="abs" style="left:863.00px;top:490.80px;font-size:12.8px;line-height:14.72px;font-weight:bold;color:#555;white-space:nowrap;">EFFEMAIL</div>
<div class="abs" style="left:1163px;top:492px;width:10px;height:10px;background:#e42121;"></div>
<div class="abs" style="left:1176.50px;top:489.24px;font-size:14.5px;line-height:16.67px;color:#5a5a5a;white-space:nowrap;">Inaktiv</div>
<div class="abs" style="left:863.00px;top:521.80px;font-size:12.8px;line-height:14.72px;font-weight:bold;color:#555;white-space:nowrap;">EFFFTP</div>
<div class="abs" style="left:1163px;top:523px;width:10px;height:10px;background:#e42121;"></div>
<div class="abs" style="left:1176.50px;top:520.24px;font-size:14.5px;line-height:16.67px;color:#5a5a5a;white-space:nowrap;">Inaktiv</div>
<div class="abs" style="left:857px;top:543px;width:1006px;height:31px;background:#f4f4f4;"></div>
<div class="abs" style="left:863.00px;top:552.80px;font-size:12.8px;line-height:14.72px;font-weight:bold;color:#555;white-space:nowrap;">EFFHTTP</div>
<div class="abs" style="left:1163px;top:554px;width:10px;height:10px;background:#e42121;"></div>
<div class="abs" style="left:1176.50px;top:551.24px;font-size:14.5px;line-height:16.67px;color:#5a5a5a;white-space:nowrap;">Inaktiv</div>
<div class="abs" style="left:863.00px;top:583.80px;font-size:12.8px;line-height:14.72px;font-weight:bold;color:#555;white-space:nowrap;">EFFOCSP</div>
<div class="abs" style="left:1163px;top:585px;width:10px;height:10px;background:#e42121;"></div>
<div class="abs" style="left:1176.50px;top:582.24px;font-size:14.5px;line-height:16.67px;color:#5a5a5a;white-space:nowrap;">Inaktiv</div>
<div class="abs" style="left:857px;top:605px;width:1006px;height:31px;background:#f4f4f4;"></div>
<div class="abs" style="left:863.00px;top:614.80px;font-size:12.8px;line-height:14.72px;font-weight:bold;color:#555;white-space:nowrap;">EFFOFTP</div>
<div class="abs" style="left:1163px;top:616px;width:10px;height:10px;background:#e42121;"></div>
<div class="abs" style="left:1176.50px;top:613.24px;font-size:14.5px;line-height:16.67px;color:#5a5a5a;white-space:nowrap;">Inaktiv</div>
<div class="abs" style="left:863.00px;top:645.80px;font-size:12.8px;line-height:14.72px;font-weight:bold;color:#555;white-space:nowrap;">EFFOFTP2</div>
<div class="abs" style="left:1163px;top:647px;width:10px;height:10px;background:#e42121;"></div>
<div class="abs" style="left:1176.50px;top:644.24px;font-size:14.5px;line-height:16.67px;color:#5a5a5a;white-space:nowrap;">Inaktiv</div>
<div class="abs" style="left:857px;top:667px;width:1006px;height:31px;background:#f4f4f4;"></div>
<div class="abs" style="left:863.00px;top:676.80px;font-size:12.8px;line-height:14.72px;font-weight:bold;color:#555;white-space:nowrap;">EFFREF</div>
<div class="abs" style="left:1163px;top:678px;width:10px;height:10px;background:#e42121;"></div>
<div class="abs" style="left:1176.50px;top:675.24px;font-size:14.5px;line-height:16.67px;color:#5a5a5a;white-space:nowrap;">Inaktiv</div>
<div class="abs" style="left:863.00px;top:707.80px;font-size:12.8px;line-height:14.72px;font-weight:bold;color:#555;white-space:nowrap;">EFFSERVER</div>
<div class="abs" style="left:1163px;top:709px;width:10px;height:10px;background:#e42121;"></div>
<div class="abs" style="left:1176.50px;top:706.24px;font-size:14.5px;line-height:16.67px;color:#5a5a5a;white-space:nowrap;">Inaktiv</div>
<div class="abs" style="left:857px;top:729px;width:1006px;height:31px;background:#f4f4f4;"></div>
<div class="abs" style="left:863.00px;top:738.80px;font-size:12.8px;line-height:14.72px;font-weight:bold;color:#555;white-space:nowrap;">EFFSERVICE</div>
<div class="abs" style="left:1013.00px;top:738.99px;font-size:12.6px;line-height:14.49px;color:#5a5a5a;white-space:nowrap;">EFFSERVICE</div>
<div class="abs" style="left:1163px;top:740px;width:10px;height:10px;background:#5cb050;"></div>
<div class="abs" style="left:1176.50px;top:737.24px;font-size:14.5px;line-height:16.67px;color:#5a5a5a;white-space:nowrap;">Aktiv</div>
<div class="abs" style="left:1283px;top:742px;width:215px;height:8px;background:#c8c8c8;"></div>
<div class="abs" style="left:1501.50px;top:738.16px;font-size:13.5px;line-height:15.52px;color:#5a5a5a;white-space:nowrap;">0 %</div>
<div class="abs" style="left:1563.00px;top:739.17px;font-size:12.4px;line-height:14.26px;color:#5a5a5a;white-space:nowrap;">IEFFECT</div>
<div class="abs" style="left:1684.00px;top:738.16px;font-size:13.5px;line-height:15.52px;color:#5a5a5a;white-space:nowrap;">1</div>
<div class="abs" style="left:1783.00px;top:737.79px;font-size:13.9px;line-height:15.98px;color:#5a5a5a;white-space:nowrap;">046975</div>
<div class="abs" style="left:857px;top:760px;width:1006px;height:31px;background:#f4f4f4;"></div>
<div class="abs" style="left:1013.00px;top:769.99px;font-size:12.6px;line-height:14.49px;color:#5a5a5a;white-space:nowrap;">QP0ZSPWT</div>
<div class="abs" style="left:1163px;top:771px;width:10px;height:10px;background:#5cb050;"></div>
<div class="abs" style="left:1176.50px;top:768.24px;font-size:14.5px;line-height:16.67px;color:#5a5a5a;white-space:nowrap;">Aktiv</div>
<div class="abs" style="left:1283px;top:773px;width:215px;height:8px;background:#c8c8c8;"></div>
<div class="abs" style="left:1283px;top:773px;width:2.4px;height:8px;background:#f59b00;"></div>
<div class="abs" style="left:1501.50px;top:769.16px;font-size:13.5px;line-height:15.52px;color:#5a5a5a;white-space:nowrap;">1.0 %</div>
<div class="abs" style="left:1563.00px;top:770.17px;font-size:12.4px;line-height:14.26px;color:#5a5a5a;white-space:nowrap;">IEFFECT</div>
<div class="abs" style="left:1684.00px;top:769.16px;font-size:13.5px;line-height:15.52px;color:#5a5a5a;white-space:nowrap;">70</div>
<div class="abs" style="left:1783.00px;top:768.79px;font-size:13.9px;line-height:15.98px;color:#5a5a5a;white-space:nowrap;">046985</div>
<div class="abs" style="left:863.00px;top:800.80px;font-size:12.8px;line-height:14.72px;font-weight:bold;color:#555;white-space:nowrap;">EFFSOA</div>
<div class="abs" style="left:1163px;top:802px;width:10px;height:10px;background:#e42121;"></div>
<div class="abs" style="left:1176.50px;top:799.24px;font-size:14.5px;line-height:16.67px;color:#5a5a5a;white-space:nowrap;">Inaktiv</div>
<div class="abs" style="left:857px;top:822px;width:1006px;height:31px;background:#f4f4f4;"></div>
<div class="abs" style="left:863.00px;top:831.80px;font-size:12.8px;line-height:14.72px;font-weight:bold;color:#555;white-space:nowrap;">EFFTELEBOX</div>
<div class="abs" style="left:1163px;top:833px;width:10px;height:10px;background:#e42121;"></div>
<div class="abs" style="left:1176.50px;top:830.24px;font-size:14.5px;line-height:16.67px;color:#5a5a5a;white-space:nowrap;">Inaktiv</div>
<div class="abs" style="left:857px;top:419px;width:1006px;height:1px;background:#e4e9ee;"></div>
<div class="abs" style="left:857px;top:450px;width:1006px;height:1px;background:#e4e9ee;"></div>
<div class="abs" style="left:857px;top:481px;width:1006px;height:1px;background:#e4e9ee;"></div>
<div class="abs" style="left:857px;top:512px;width:1006px;height:1px;background:#e4e9ee;"></div>
<div class="abs" style="left:857px;top:543px;width:1006px;height:1px;background:#e4e9ee;"></div>
<div class="abs" style="left:857px;top:574px;width:1006px;height:1px;background:#e4e9ee;"></div>
<div class="abs" style="left:857px;top:605px;width:1006px;height:1px;background:#e4e9ee;"></div>
<div class="abs" style="left:857px;top:636px;width:1006px;height:1px;background:#e4e9ee;"></div>
<div class="abs" style="left:857px;top:667px;width:1006px;height:1px;background:#e4e9ee;"></div>
<div class="abs" style="left:857px;top:698px;width:1006px;height:1px;background:#e4e9ee;"></div>
<div class="abs" style="left:857px;top:729px;width:1006px;height:1px;background:#e4e9ee;"></div>
<div class="abs" style="left:857px;top:760px;width:1006px;height:1px;background:#e4e9ee;"></div>
<div class="abs" style="left:857px;top:791px;width:1006px;height:1px;background:#e4e9ee;"></div>
<div class="abs" style="left:857px;top:822px;width:1006px;height:1px;background:#e4e9ee;"></div>
<div class="abs" style="left:857px;top:853px;width:1006px;height:1px;background:#e4e9ee;"></div>
<div class="abs" style="left:857px;top:884px;width:1006px;height:1px;background:#e4e9ee;"></div>
<div class="abs" style="left:857px;top:388px;width:1px;height:480px;background:#e4e9ee;"></div>
<div class="abs" style="left:1007px;top:388px;width:1px;height:480px;background:#e4e9ee;"></div>
<div class="abs" style="left:1157px;top:388px;width:1px;height:480px;background:#e4e9ee;"></div>
<div class="abs" style="left:1277px;top:388px;width:1px;height:480px;background:#e4e9ee;"></div>
<div class="abs" style="left:1557px;top:388px;width:1px;height:480px;background:#e4e9ee;"></div>
<div class="abs" style="left:1677px;top:388px;width:1px;height:480px;background:#e4e9ee;"></div>
<div class="abs" style="left:1777px;top:388px;width:1px;height:480px;background:#e4e9ee;"></div>
<div class="abs" style="left:1863px;top:388px;width:1px;height:480px;background:#e4e9ee;"></div>
<div class="abs" style="left:913px;top:665px;width:233px;height:36px;background:rgba(0,0,0,0.09)"></div>
<div class="abs" style="left:908px;top:660px;width:234px;height:36px;background:#f4f4f4;border:1px solid #d2d2d2"></div>
<svg class="abs" style="left:919px;top:654.5px" width="14" height="7" viewBox="0 0 14 7"><path d="M0,6.5 L6.8,0.2 L13.6,6.5 Z" fill="#a3a3a3"/></svg>
<svg class="abs" style="left:927px;top:672px" width="13" height="13" viewBox="0 0 13 13"><circle cx="6.5" cy="6.5" r="6.2" fill="#444"/><path d="M4.8,3.6 L9.4,6.5 L4.8,9.4 Z" fill="#f4f4f4"/></svg>
<div class="abs" style="left:953.40px;top:669.60px;font-size:14px;line-height:16.1px;color:#4a4a4a;white-space:nowrap;">Subsystem *OFTP2 starten</div>
</body></html>
